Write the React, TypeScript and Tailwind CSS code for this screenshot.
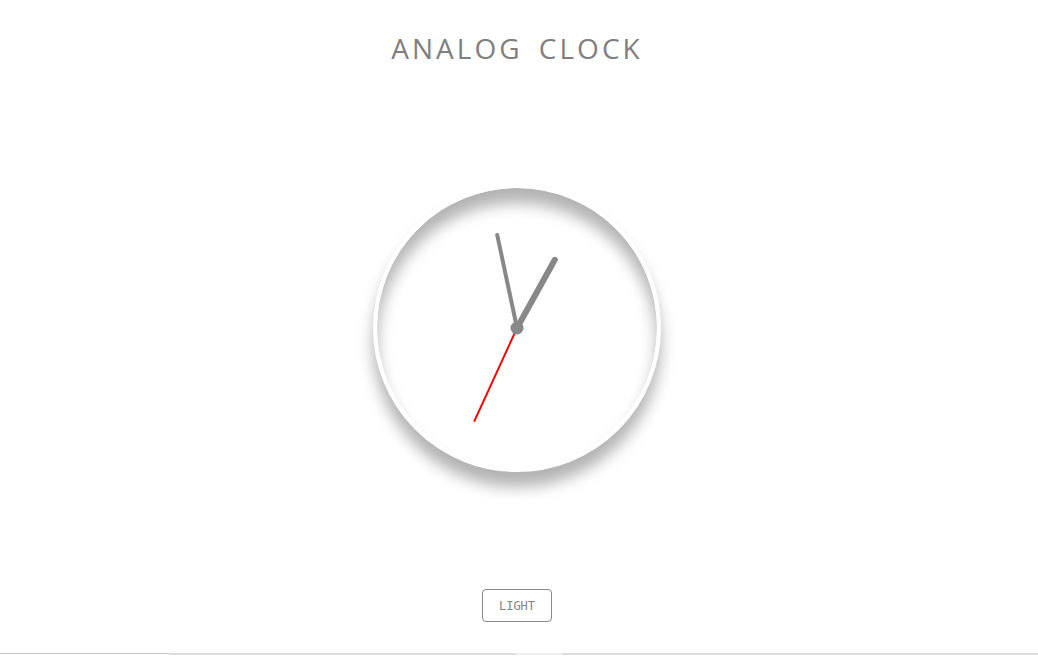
const center = 140;

const point = (deg: number, len: number) => {
  const r = (deg * Math.PI) / 180;
  return { x: center + len * Math.sin(r), y: center - len * Math.cos(r) };
};

const Hands = () => {
  const hour = point(29, 78);
  const minute = point(348, 95);
  const secEnd = point(204.6, 103);
  const secTail = point(24.6, 20);
  return (
    <svg width="280" height="280" viewBox="0 0 280 280" className="block">
      <line x1={secTail.x} y1={secTail.y} x2={secEnd.x} y2={secEnd.y} stroke="#ff0000" strokeWidth="2" />
      <line x1={center} y1={center} x2={minute.x} y2={minute.y} stroke="#888888" strokeWidth="4" strokeLinecap="round" />
      <line x1={center} y1={center} x2={hour.x} y2={hour.y} stroke="#888888" strokeWidth="6" strokeLinecap="round" />
      <circle cx={center} cy={center} r="6.5" fill="#888888" />
    </svg>
  );
};

export default function App() {
  return (
    <div className="flex h-[656px] w-full flex-col items-center bg-white">
      <div className="flex w-full flex-1 flex-col items-center pr-[4px]">
        <h1 className="pt-[28px] text-[28px] font-medium leading-[40px] tracking-[3px] text-[#7f7f7f] [font-family:'Open_Sans',sans-serif] [word-spacing:6px]">
          ANALOG CLOCK
        </h1>
        <div className="mt-[116px] h-[288px] w-[288px] rounded-full border-4 border-white bg-white shadow-[0_-15px_15px_rgba(255,255,255,0.05),inset_0_-15px_15px_rgba(255,255,255,0.05),0_15px_15px_rgba(0,0,0,0.3),inset_0_15px_15px_rgba(0,0,0,0.3)]">
          <Hands />
        </div>
        <button className="mt-[117px] h-[33px] w-[70px] rounded-[4px] border border-[#888] bg-white text-[12px] text-[#858585] [font-family:'DejaVu_Sans_Mono',monospace]">
          LIGHT
        </button>
      </div>
      <div className="mb-[1px] flex h-[2px] w-full">
        <div className="w-[169px] border-t border-[#c4c4c4]" />
        <div className="w-[347px] bg-[#dcdcdc]" />
        <div className="w-[46px] bg-[#efefef]" />
        <div className="flex-1 bg-[#dcdcdc]" />
      </div>
    </div>
  );
}
